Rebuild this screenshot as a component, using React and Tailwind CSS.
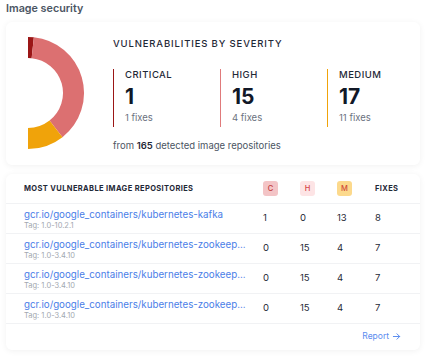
import React from 'react';

const font = { fontFamily: 'Inter, "Noto Sans", sans-serif' };

// point on circle, angle 0 = top, clockwise
function pt(cx, cy, r, deg) {
    const a = (deg * Math.PI) / 180;
    return [cx + r * Math.sin(a), cy - r * Math.cos(a)];
}

function arc(cx, cy, rIn, rOut, a0, a1) {
    const [x0, y0] = pt(cx, cy, rOut, a0);
    const [x1, y1] = pt(cx, cy, rOut, a1);
    const [x2, y2] = pt(cx, cy, rIn, a1);
    const [x3, y3] = pt(cx, cy, rIn, a0);
    const large = a1 - a0 > 180 ? 1 : 0;
    return `M${x0} ${y0} A${rOut} ${rOut} 0 ${large} 1 ${x1} ${y1} L${x2} ${y2} A${rIn} ${rIn} 0 ${large} 0 ${x3} ${y3} Z`;
}

function Donut() {
    const segs = [
        { a0: 0, a1: 6, color: '#9b1616' },
        { a0: 6, a1: 142, color: '#dc7071' },
        { a0: 142, a1: 180, color: '#f0a30a' },
    ];
    return (
        <svg width="70" height="120" viewBox="0 0 70 120" className="shrink-0">
            {segs.map((s, i) => (
                <path key={i} d={arc(6, 60, 35, 56, s.a0, s.a1)} fill={s.color} />
            ))}
        </svg>
    );
}

const severities = [
    { label: 'CRITICAL', count: 1, fixes: '1 fixes', border: 'border-[#9b1616]' },
    { label: 'HIGH', count: 15, fixes: '4 fixes', border: 'border-[#e07a7b]' },
    { label: 'MEDIUM', count: 17, fixes: '11 fixes', border: 'border-[#f0a30a]' },
];

const repos = [
    { name: 'gcr.io/google_containers/kubernetes-kafka', tag: 'Tag: 1.0-10.2.1', c: 1, h: 0, m: 13, fixes: 8 },
    { name: 'gcr.io/google_containers/kubernetes-zookeep...', tag: 'Tag: 1.0-3.4.10', c: 0, h: 15, m: 4, fixes: 7 },
    { name: 'gcr.io/google_containers/kubernetes-zookeep...', tag: 'Tag: 1.0-3.4.10', c: 0, h: 15, m: 4, fixes: 7 },
    { name: 'gcr.io/google_containers/kubernetes-zookeep...', tag: 'Tag: 1.0-3.4.10', c: 0, h: 15, m: 4, fixes: 7 },
];

export default function App() {
    return (
        <div className="w-[429px] h-[357px] bg-white overflow-hidden px-[6px]" style={font}>
            <h2 className="text-[10.75px] font-semibold text-[#4b5563] h-[18px] leading-[18px] mb-[4px]">
                Image security
            </h2>

            {/* Severity card */}
            <div className="h-[143px] w-[414px] bg-white rounded-md shadow-[0_1px_6px_rgba(0,0,0,0.06)] flex">
                <div className="w-[107px] shrink-0 pt-[11px] pl-[16px]">
                    <Donut />
                </div>
                <div className="flex flex-col pt-[16px]">
                    <div className="text-[9.5px] font-medium tracking-[0.09em] text-[#1f2937] leading-[12px]">
                        VULNERABILITIES BY SEVERITY
                    </div>
                    <div className="flex mt-[19px]">
                        {severities.map((s) => (
                            <div key={s.label} className={`w-[107px] h-[58px] border-l-[1.5px] ${s.border} pl-[11px] flex flex-col`}>
                                <span className="text-[9.5px] font-medium tracking-[0.05em] text-[#1f2937] leading-[12px]">
                                    {s.label}
                                </span>
                                <span className="text-[21px] font-bold text-[#111827] leading-[24px] mt-[4px]">
                                    {s.count}
                                </span>
                                <span className="text-[9.5px] text-[#6b7280] leading-[12px] mt-[3px]">
                                    {s.fixes}
                                </span>
                            </div>
                        ))}
                    </div>
                    <div className="text-[9.5px] text-[#4b5563] leading-[12px] mt-[13px]">
                        from <span className="font-semibold text-[#1f2937]">165</span> detected image repositories
                    </div>
                </div>
            </div>

            {/* Repositories card */}
            <div className="mt-[9px] h-[176px] w-[414px] bg-white rounded-md shadow-[0_1px_6px_rgba(0,0,0,0.06)]">
                <div className="h-[30px] grid grid-cols-[239px_37px_37px_38px_1fr] items-center pl-[18px] border-b border-[#f1f2f4]">
                    <span className="text-[7.5px] font-bold tracking-[0.05em] text-[#1f2937]">
                        MOST VULNERABLE IMAGE REPOSITORIES
                    </span>
                    <span className="w-[15px] h-[15px] rounded-[3px] bg-[#f3c4c6] text-[#c23b3b] text-[7.5px] font-medium flex items-center justify-center">C</span>
                    <span className="w-[15px] h-[15px] rounded-[3px] bg-[#fde4e5] text-[#d64545] text-[7.5px] font-medium flex items-center justify-center">H</span>
                    <span className="w-[15px] h-[15px] rounded-[3px] bg-[#fcd98c] text-[#d04a3a] text-[7.5px] font-medium flex items-center justify-center">M</span>
                    <span className="text-[7.5px] font-bold tracking-[0.05em] text-[#1f2937]">FIXES</span>
                </div>
                {repos.map((r, i) => (
                    <div key={i} className="h-[30px] grid grid-cols-[239px_37px_37px_38px_1fr] items-center pl-[18px] border-b border-[#f1f2f4]">
                        <div className="flex flex-col">
                            <span className="text-[9.75px] leading-[13px] text-[#4a7ee8] whitespace-nowrap">{r.name}</span>
                            <span className="text-[7.5px] leading-[9px] text-[#a3a8b0]">{r.tag}</span>
                        </div>
                        <span className="text-[9.5px] text-[#1f2937]">{r.c}</span>
                        <span className="text-[9.5px] text-[#1f2937]">{r.h}</span>
                        <span className="text-[9.5px] text-[#1f2937]">{r.m}</span>
                        <span className="text-[9.5px] text-[#1f2937]">{r.fixes}</span>
                    </div>
                ))}
                <div className="h-[25px] flex items-center justify-end pr-[19px]">
                    <span className="text-[8.5px] text-[#5b8def] flex items-center gap-[3px]">
                        Report
                        <svg width="9" height="9" viewBox="0 0 10 10" fill="none" stroke="#5b8def" strokeWidth="1.1" strokeLinecap="round" strokeLinejoin="round">
                            <path d="M1.5 5h7M5.5 2l3 3-3 3" />
                        </svg>
                    </span>
                </div>
            </div>
        </div>
    );
}
